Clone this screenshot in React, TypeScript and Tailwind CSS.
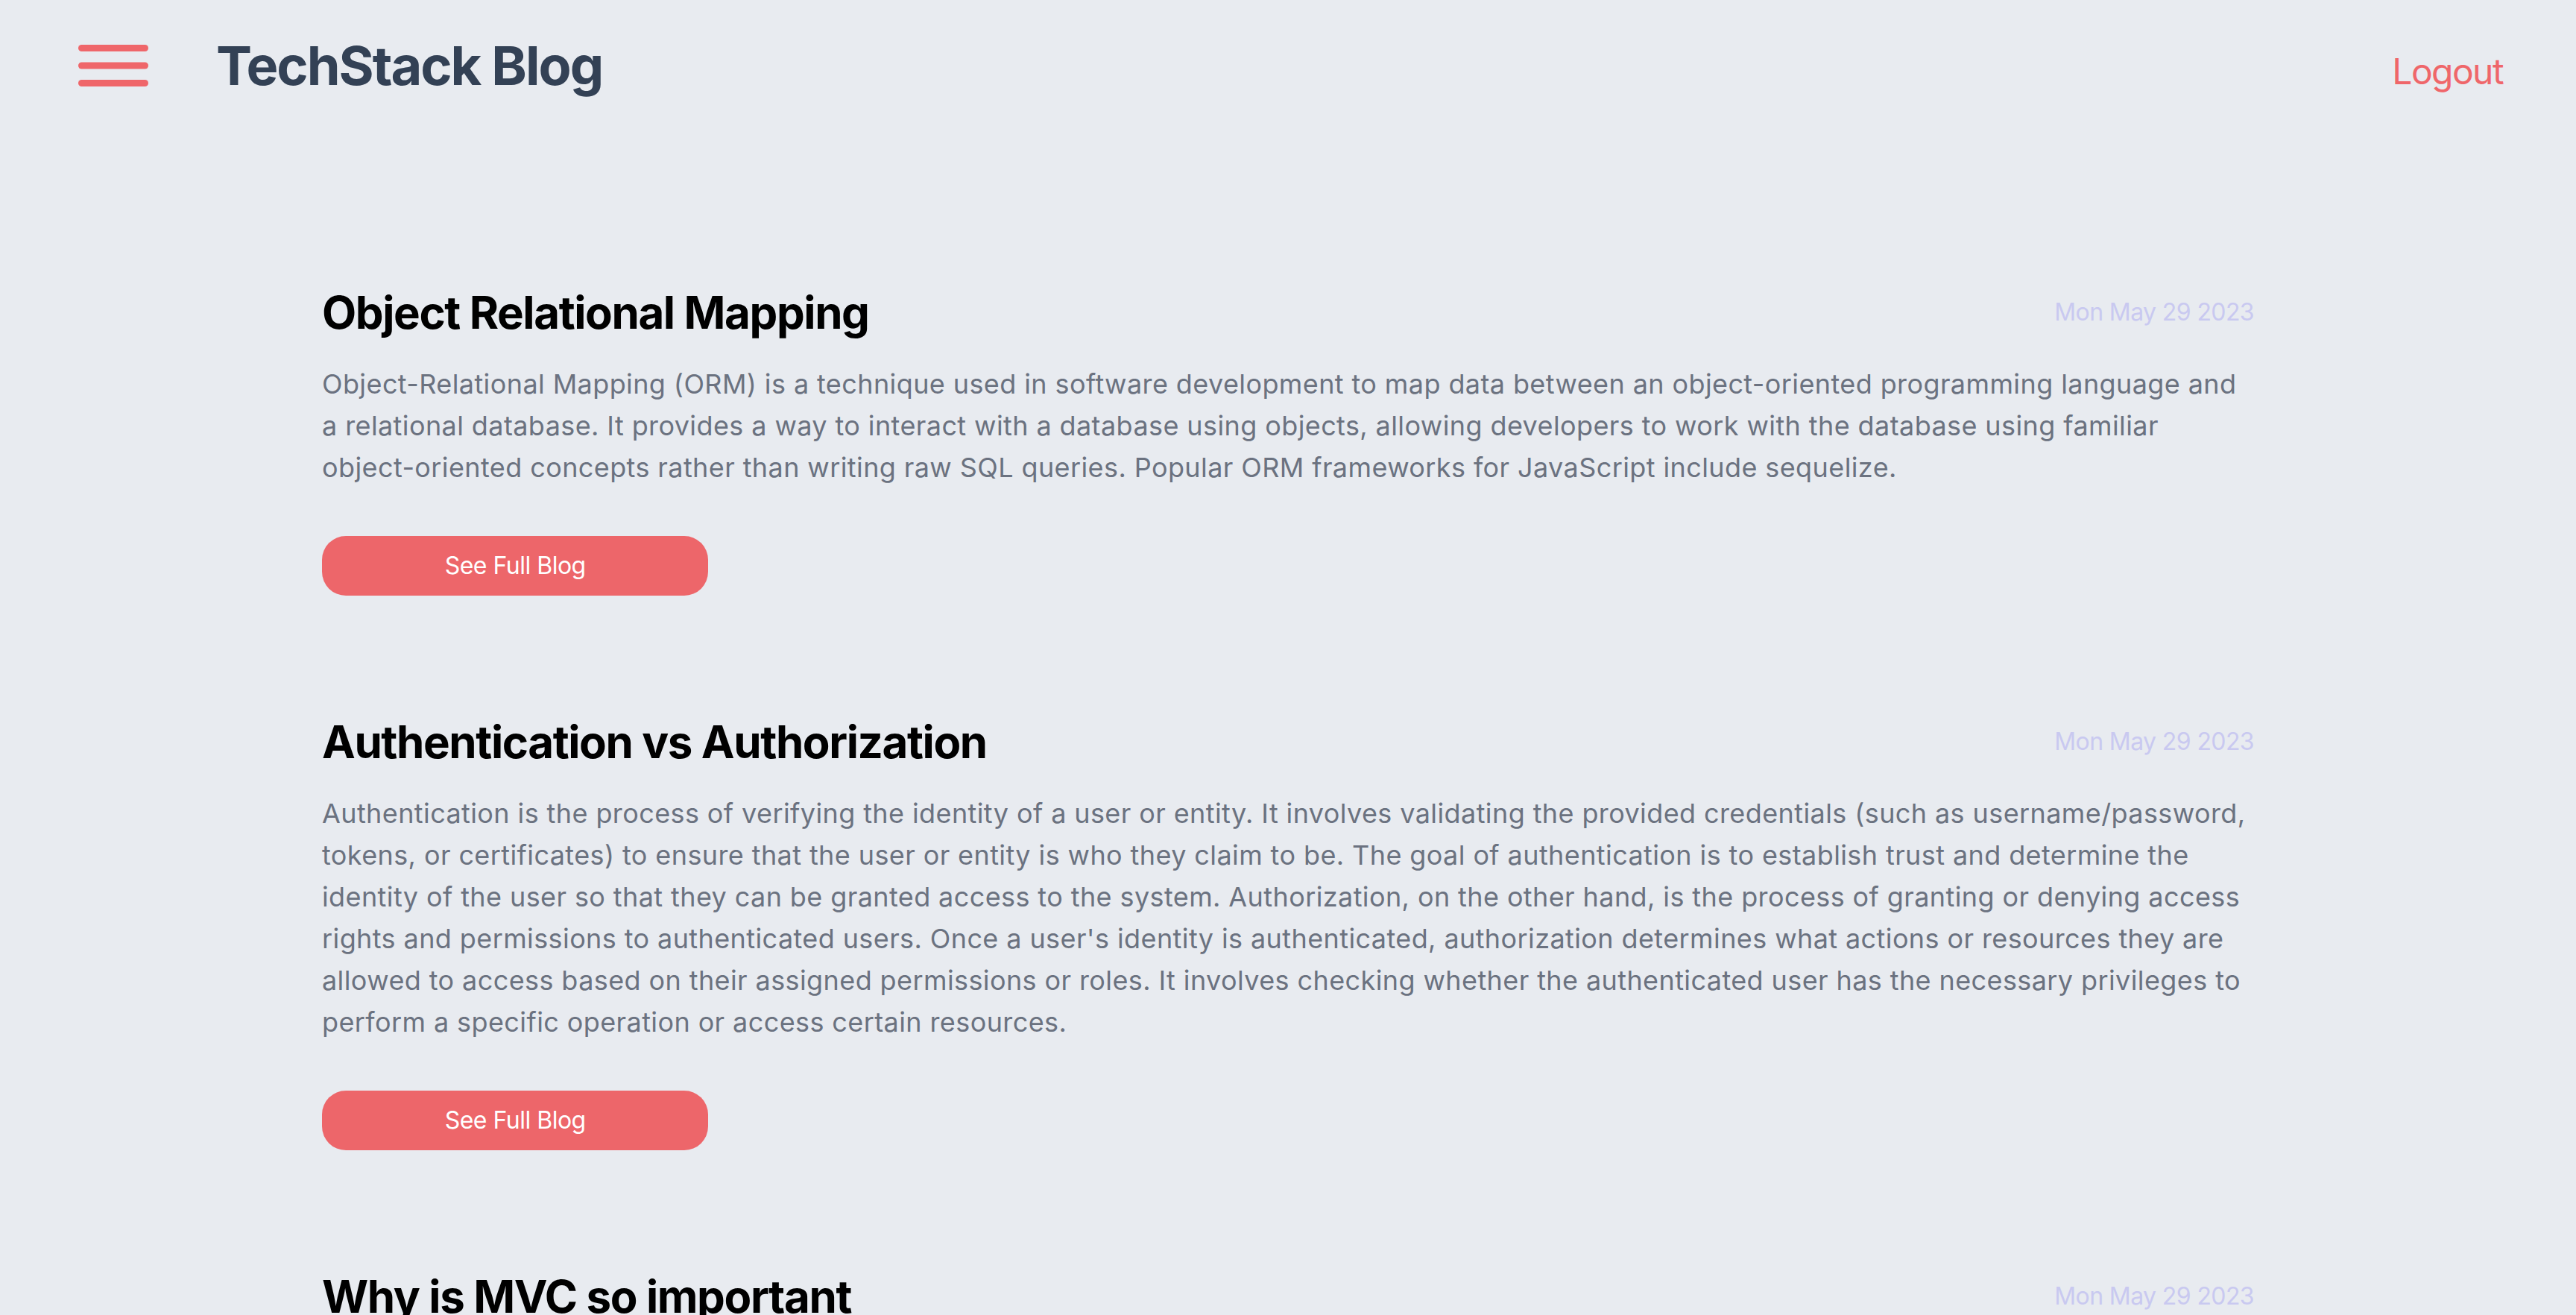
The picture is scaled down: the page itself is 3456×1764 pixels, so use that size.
import React from 'react'

interface Post {
  title: string
  date: string
  body: string
}

const posts: Post[] = [
  {
    title: 'Object Relational Mapping',
    date: 'Mon May 29 2023',
    body:
      'Object-Relational Mapping (ORM) is a technique used in software development to map data between an object-oriented programming language and a relational database. It provides a way to interact with a database using objects, allowing developers to work with the database using familiar object-oriented concepts rather than writing raw SQL queries. Popular ORM frameworks for JavaScript include sequelize.',
  },
  {
    title: 'Authentication vs Authorization',
    date: 'Mon May 29 2023',
    body:
      "Authentication is the process of verifying the identity of a user or entity. It involves validating the provided credentials (such as username/password, tokens, or certificates) to ensure that the user or entity is who they claim to be. The goal of authentication is to establish trust and determine the identity of the user so that they can be granted access to the system. Authorization, on the other hand, is the process of granting or denying access rights and permissions to authenticated users. Once a user's identity is authenticated, authorization determines what actions or resources they are allowed to access based on their assigned permissions or roles. It involves checking whether the authenticated user has the necessary privileges to perform a specific operation or access certain resources.",
  },
  {
    title: 'Why is MVC so important',
    date: 'Mon May 29 2023',
    body:
      'MVC (Model-View-Controller) is a design pattern that separates an application into three parts: the model, which handles data, the view, which handles presentation, and the controller, which handles input. This separation keeps code organized and easier to maintain.',
  },
]

function MenuIcon() {
  return (
    <svg width="94" height="56" viewBox="0 0 94 56" fill="none">
      <line x1="4.5" y1="4.5" x2="89.5" y2="4.5" stroke="#ef666a" strokeWidth="9" strokeLinecap="round" />
      <line x1="4.5" y1="28" x2="89.5" y2="28" stroke="#ef666a" strokeWidth="9" strokeLinecap="round" />
      <line x1="4.5" y1="51.5" x2="89.5" y2="51.5" stroke="#ef666a" strokeWidth="9" strokeLinecap="round" />
    </svg>
  )
}

function PostCard({ post }: { post: Post }) {
  return (
    <article className="py-[80px]">
      <div className="flex items-center justify-between">
        <h2 className="text-[60px] leading-[72px] font-bold text-black tracking-[-1.4px]">{post.title}</h2>
        <span className="text-[32px] leading-[48px] tracking-[-0.6px] text-[#c9c9f0]">{post.date}</span>
      </div>
      <p className="mt-[32px] text-[36px] leading-[56px] tracking-[0.4px] text-[#6b7280]">{post.body}</p>
      <button className="mt-[64px] w-1/5 rounded-[32px] bg-[#ed666a] py-[16px] text-[32px] leading-[48px] tracking-[-0.5px] text-white">
        See Full Blog
      </button>
    </article>
  )
}

export default function App() {
  return (
    <div className="min-h-screen bg-[#e8ebf0] font-['Inter','Noto_Sans',sans-serif]">
      <header className="flex items-end justify-between pl-[105px] pr-[98px] pt-[48px]">
        <div className="flex items-center gap-[91px]">
          <button aria-label="menu" className="flex">
            <MenuIcon />
          </button>
          <h1 className="text-[72px] leading-[80px] font-bold tracking-[-2px] text-[#334155]">TechStack Blog</h1>
        </div>
        <button className="text-[48px] leading-[64px] tracking-[-1.6px] text-[#ef666a]">Logout</button>
      </header>

      <main className="mx-auto w-3/4 pt-[175px]">
        {posts.map((post) => (
          <PostCard key={post.title} post={post} />
        ))}
      </main>
    </div>
  )
}
